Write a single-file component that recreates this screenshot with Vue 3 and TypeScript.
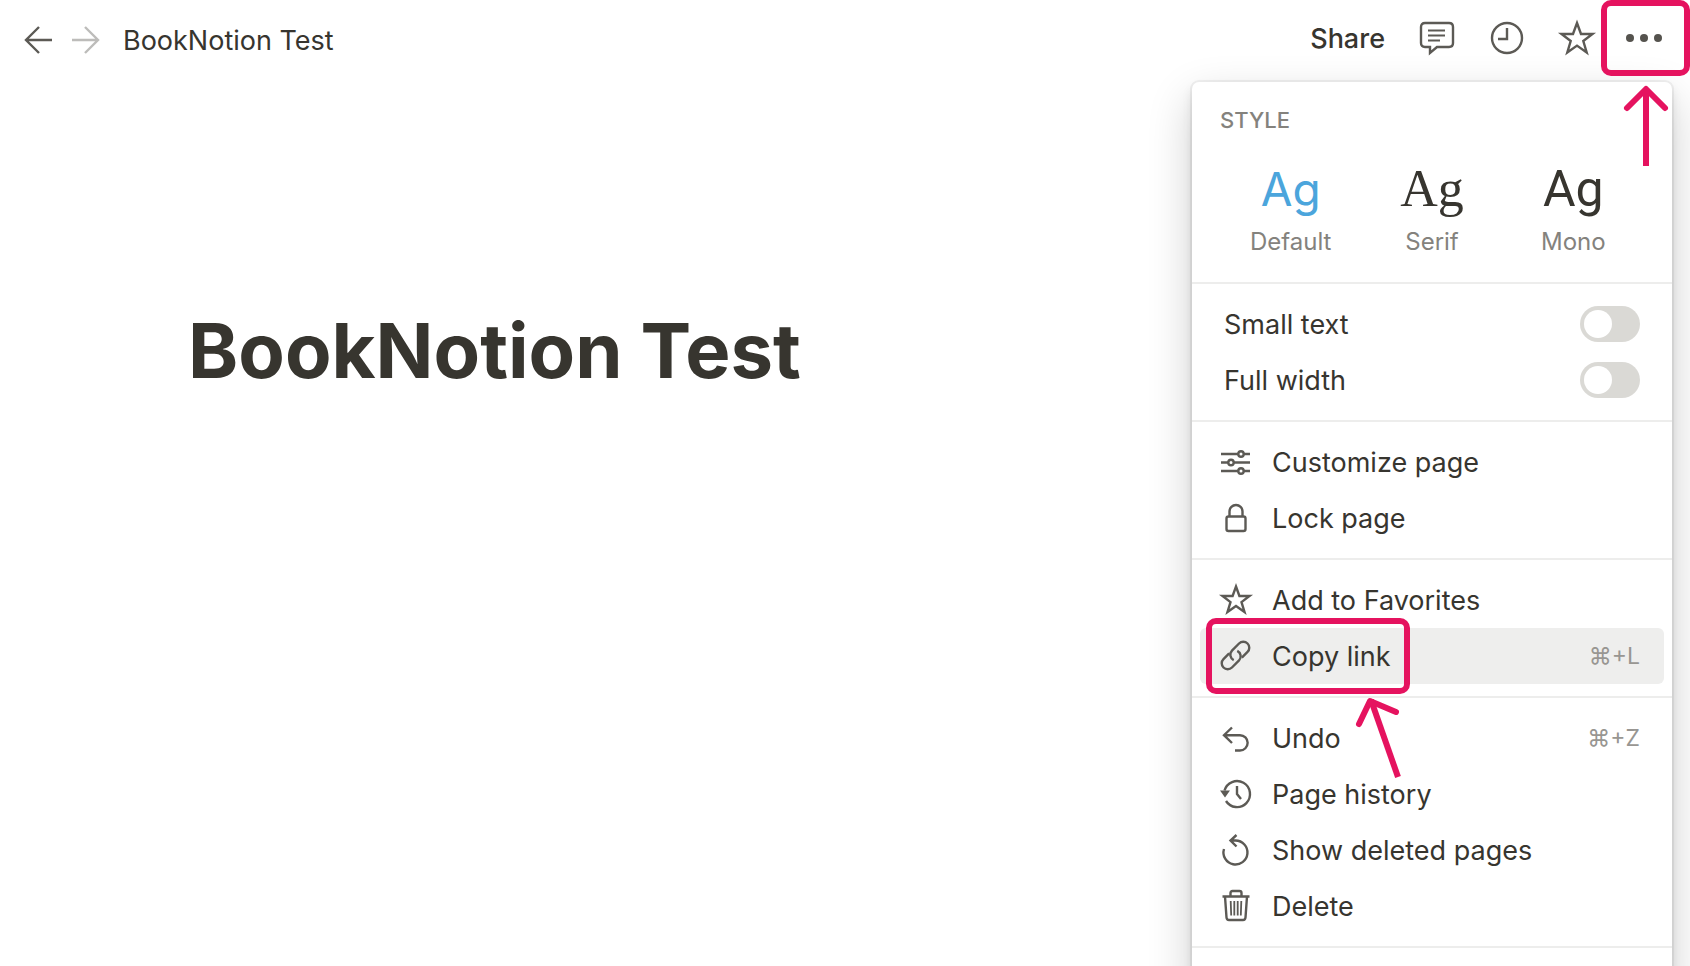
<script setup lang="ts">
import { ref } from 'vue'

interface MenuItem {
  label: string
  icon: string
  shortcut?: string
  active?: boolean
}

const fonts = [
  { name: 'Default', cls: 'sans' },
  { name: 'Serif', cls: 'serif' },
  { name: 'Mono', cls: 'mono' },
]
const selectedFont = ref('Default')

const toggles = ref([
  { id: 'small-text', label: 'Small text', on: false },
  { id: 'full-width', label: 'Full width', on: false },
])

const groups: MenuItem[][] = [
  [
    { label: 'Customize page', icon: 'sliders' },
    { label: 'Lock page', icon: 'lock' },
  ],
  [
    { label: 'Add to Favorites', icon: 'star' },
    { label: 'Copy link', icon: 'link', shortcut: '⌘+L', active: true },
  ],
  [
    { label: 'Undo', icon: 'undo', shortcut: '⌘+Z' },
    { label: 'Page history', icon: 'history' },
    { label: 'Show deleted pages', icon: 'restore' },
    { label: 'Delete', icon: 'trash' },
  ],
]
</script>

<template>
  <div class="page">
    <header class="topbar">
      <nav class="nav" aria-label="Page navigation">
        <button class="icon-btn" type="button" aria-label="Back">
          <svg width="30" height="30" viewBox="0 0 30 30"><path d="M29 15H3M16 2L3 15L16 28" /></svg>
        </button>
        <button class="icon-btn faded" type="button" aria-label="Forward">
          <svg width="30" height="30" viewBox="0 0 30 30"><path d="M1 15H27M14 2L27 15L14 28" /></svg>
        </button>
        <a class="crumb" href="#">BookNotion Test</a>
      </nav>
      <div class="actions">
        <button class="share" type="button">Share</button>
        <button class="icon-btn" type="button" aria-label="Comments">
          <svg width="36" height="36" viewBox="0 0 36 36">
            <path d="M6 3H30Q34 3 34 7V23Q34 27 30 27H18L11 33V27H6Q2 27 2 23V7Q2 3 6 3Z" />
            <path class="thin" d="M9 10.500H26M9 15.500H26M9 20.500H21" />
          </svg>
        </button>
        <button class="icon-btn" type="button" aria-label="Updates">
          <svg width="36" height="36" viewBox="0 0 36 36">
            <circle cx="18" cy="18" r="15" />
            <path d="M18 8V19H9" />
          </svg>
        </button>
        <button class="icon-btn" type="button" aria-label="Favorite">
          <svg width="36" height="36" viewBox="0 0 36 36">
            <path d="M18 3L22 14H33.500L24.300 21L27.700 32.500L18 25.600L8.300 32.500L11.700 21L2.500 14H14Z" />
          </svg>
        </button>
        <button class="more" type="button" aria-label="More options">
          <svg class="dots" width="36" height="12" viewBox="0 0 36 12">
            <circle cx="4" cy="6" r="4" /><circle cx="18" cy="6" r="4" /><circle cx="32" cy="6" r="4" />
          </svg>
          <svg class="mark arrow-up" width="48" height="88" viewBox="0 0 48 88">
            <path d="M24 84V8" />
            <path class="round" d="M5 26L24 7L43 26" />
          </svg>
        </button>
      </div>
    </header>

    <main class="content">
      <h1>BookNotion Test</h1>
    </main>

    <aside class="menu" aria-label="Page options">
      <section class="style-group">
        <h2>STYLE</h2>
        <div class="fonts">
          <button
            v-for="f in fonts"
            :key="f.name"
            type="button"
            class="font"
            :class="[f.cls, { selected: f.name === selectedFont }]"
            @click="selectedFont = f.name"
          >
            <span class="sample">Ag</span>
            <span class="name">{{ f.name }}</span>
          </button>
        </div>
      </section>

      <section class="group">
        <div v-for="t in toggles" :key="t.id" class="row toggle-row">
          <label :for="t.id">{{ t.label }}</label>
          <input :id="t.id" v-model="t.on" class="switch" type="checkbox" role="switch" />
        </div>
      </section>

      <section v-for="(items, i) in groups" :key="i" class="group">
        <button
          v-for="item in items"
          :key="item.label"
          type="button"
          class="row"
          :class="{ active: item.active }"
        >
          <svg class="icon" width="32" height="32" viewBox="0 0 32 32">
            <template v-if="item.icon === 'sliders'">
              <path d="M1 8H18M24 8H30M1 16.500H8M14 16.500H30M1 25H18M24 25H30" />
              <circle cx="21" cy="8" r="2.700" /><circle cx="11" cy="16.500" r="2.700" /><circle cx="21" cy="25" r="2.700" />
            </template>
            <template v-else-if="item.icon === 'lock'">
              <rect x="6.500" y="14.500" width="19" height="14.500" rx="2" />
              <path d="M9.500 14.500V9.500A6.500 6.500 0 0 1 22.500 9.500V14.500" />
            </template>
            <template v-else-if="item.icon === 'star'">
              <path d="M16 2.500L19.400 12H29.500L21.500 18.100L24.500 28L16 22L7.500 28L10.500 18.100L2.500 12H12.600Z" />
            </template>
            <template v-else-if="item.icon === 'link'">
              <g transform="translate(15.500 15.500) rotate(-45)">
                <path d="M-3 -6H-11A6 6 0 0 0 -11 6H-1A6 6 0 0 0 4.500 -2" />
                <path d="M3 6H11A6 6 0 0 0 11 -6H1A6 6 0 0 0 -4.500 2" />
              </g>
            </template>
            <template v-else-if="item.icon === 'undo'">
              <path d="M12 5.500L4 13.200L12 21M4 13.200H20A7.600 7.600 0 0 1 20 28.500H15" />
            </template>
            <template v-else-if="item.icon === 'history'">
              <path d="M4.500 12.500A13 13 0 1 1 6 23M17 8V16L21 21" />
              <path class="solid" d="M0 12.500H10L5 19.500Z" />
            </template>
            <template v-else-if="item.icon === 'restore'">
              <path d="M4 15A12 12 0 1 0 15.500 6.500H11M16.500 1L10.500 6.500L16.500 12.500" />
            </template>
            <template v-else>
              <path d="M2.500 6.500H29.500M10.500 6.500V3Q10.500 1 12.500 1H19.500Q21.500 1 21.500 3V6.500M5 6.500L6.500 27.500Q6.700 30 9 30H23Q25.300 30 25.500 27.500L27 6.500" />
              <path class="thin" d="M10.700 11L11.200 25.500M14.300 11V25.500M17.700 11V25.500M21.300 11L20.800 25.500" />
            </template>
          </svg>
          <span class="label">{{ item.label }}</span>
          <kbd v-if="item.shortcut">{{ item.shortcut }}</kbd>
          <template v-if="item.active">
            <span class="mark-box"></span>
            <svg class="mark arrow-slant" width="56" height="88" viewBox="0 0 56 88">
              <path d="M46 83L19 6" />
              <path class="round" d="M7 30L18 7L44 18" />
            </svg>
          </template>
        </button>
      </section>
    </aside>
  </div>
</template>

<style>
body {
  margin: 0;
  background: #fff;
}
</style>

<style scoped>
.page {
  position: relative;
  height: 100vh;
  overflow: hidden;
  font-family: Inter, "Liberation Sans", sans-serif;
  font-size: 27px;
  color: #37352f;
}
button {
  margin: 0;
  padding: 0;
  border: 0;
  background: none;
  font: inherit;
  color: inherit;
  text-align: left;
  cursor: pointer;
}
svg {
  display: block;
  flex: none;
  overflow: visible;
  fill: none;
  stroke: #5c5a55;
  stroke-width: 2.4;
}
svg .thin {
  stroke-width: 1.8;
}
svg .solid {
  fill: #5c5a55;
  stroke: none;
}
.topbar {
  position: relative;
  z-index: 2;
  display: flex;
  justify-content: space-between;
  height: 76px;
}
.nav {
  display: flex;
  align-items: center;
  gap: 18px;
  padding: 4px 0 0 23px;
}
.faded {
  opacity: 0.4;
}
.crumb {
  margin-left: 4px;
  color: inherit;
  text-decoration: none;
}
.actions {
  display: flex;
  align-items: center;
}
.actions .icon-btn {
  margin-left: 34px;
}
.share {
  font-weight: 500;
}
.more {
  position: relative;
  box-sizing: border-box;
  display: flex;
  align-items: center;
  justify-content: center;
  width: 89px;
  height: 76px;
  margin-left: 6px;
  padding-right: 3px;
  border: 6px solid #e5135f;
  border-radius: 10px;
}
.more circle {
  fill: #55534e;
  stroke: none;
}
.mark {
  position: absolute;
  stroke: #e5135f;
  stroke-width: 6;
  pointer-events: none;
}
.mark .round {
  stroke-linecap: round;
  stroke-linejoin: round;
}
.arrow-up {
  top: 76px;
  left: 15px;
}
.content {
  padding: 224px 188px 0;
}
h1 {
  margin: 0;
  font-size: 76px;
  line-height: 100px;
  font-weight: 700;
}
.menu {
  position: absolute;
  z-index: 1;
  top: 82px;
  right: 18px;
  bottom: -24px;
  width: 480px;
  border-radius: 7px;
  background: #fff;
  box-shadow:
    0 0 0 2px rgba(15, 15, 15, 0.05),
    0 6px 11px rgba(15, 15, 15, 0.1),
    0 17px 45px rgba(15, 15, 15, 0.2);
}
.style-group {
  box-sizing: border-box;
  height: 202px;
  padding: 24px 28px 0;
  border-bottom: 2px solid #ededec;
}
h2 {
  margin: 0;
  font-size: 22px;
  line-height: 28px;
  font-weight: 500;
  color: #84827d;
}
.fonts {
  display: grid;
  grid-template-columns: repeat(3, 1fr);
  margin-top: 24px;
}
.font {
  display: flex;
  flex-direction: column;
  align-items: center;
}
.sample {
  margin-bottom: 4px;
  font-size: 46px;
  line-height: 62px;
}
.selected .sample {
  color: #4ba5dc;
}
.serif .sample {
  font-family: "Liberation Serif", serif;
  font-size: 52px;
}
.mono .sample {
  font-family: Roboto, sans-serif;
  font-size: 50px;
}
.name {
  font-size: 24px;
  line-height: 36px;
  color: #84827d;
}
.group {
  padding: 12px 8px;
  border-bottom: 2px solid #ededec;
}
.row {
  position: relative;
  display: flex;
  align-items: center;
  box-sizing: border-box;
  width: 100%;
  height: 56px;
  padding: 0 24px 0 20px;
  border-radius: 6px;
}
.toggle-row {
  justify-content: space-between;
  padding-left: 24px;
}
.active {
  background: #eeeeed;
}
.label {
  flex: 1;
  margin-left: 20px;
}
kbd {
  font-family: Inter, "DejaVu Sans", sans-serif;
  font-size: 23px;
  color: #989692;
}
.switch {
  appearance: none;
  display: flex;
  align-items: center;
  box-sizing: border-box;
  width: 60px;
  height: 36px;
  margin: 0;
  padding: 0 4px;
  border-radius: 18px;
  background: #dad9d5;
  cursor: pointer;
}
.switch::before {
  content: "";
  width: 28px;
  height: 28px;
  border-radius: 50%;
  background: #fff;
}
.switch:checked {
  justify-content: flex-end;
  background: #4ba5dc;
}
.mark-box {
  position: absolute;
  top: -10px;
  left: 6px;
  box-sizing: border-box;
  width: 204px;
  height: 76px;
  border: 6px solid #e5135f;
  border-radius: 10px;
}
.arrow-slant {
  z-index: 1;
  top: 66px;
  left: 152px;
}
</style>
